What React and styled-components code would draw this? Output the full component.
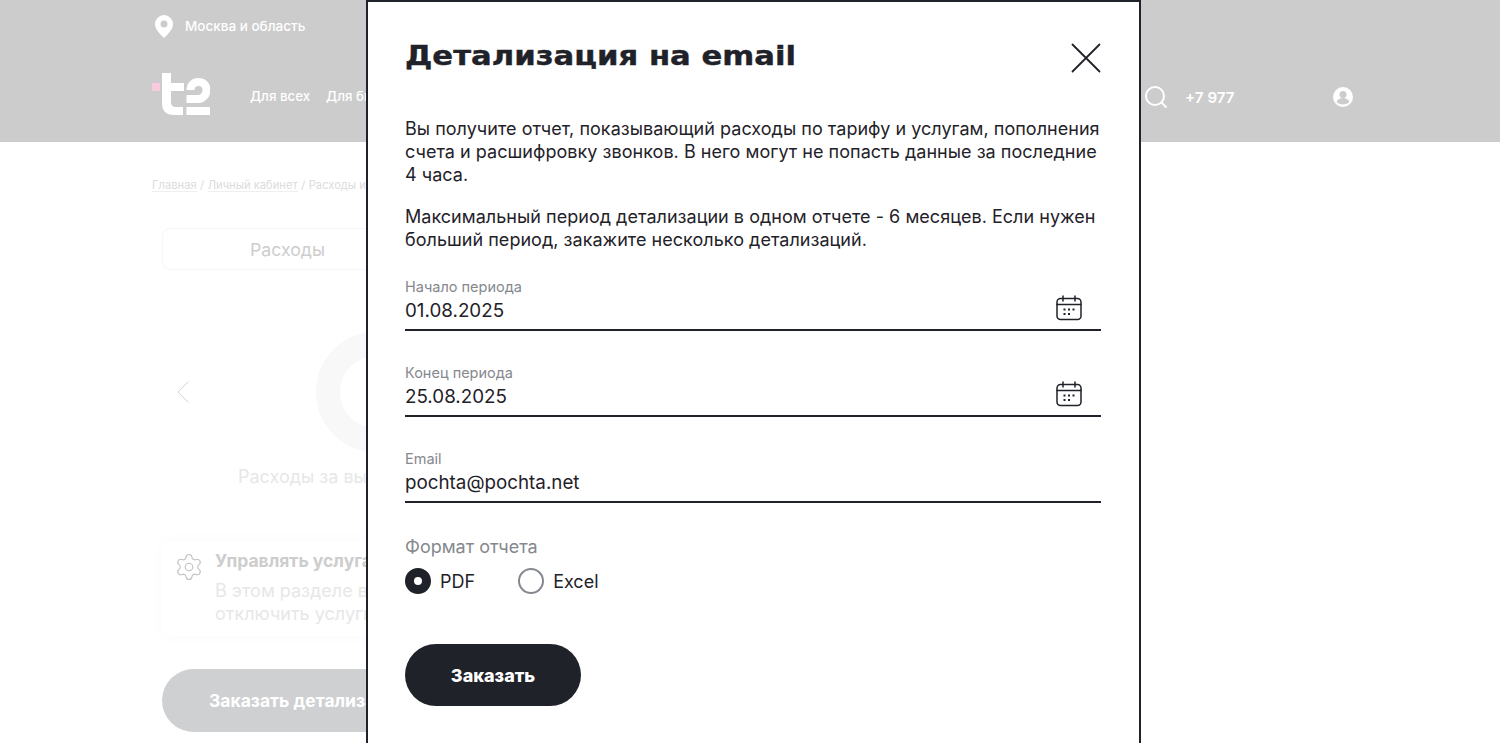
import styled, { createGlobalStyle } from "styled-components";
import { Settings, ChevronLeft } from "lucide-react";

const GlobalStyle = createGlobalStyle`
  html, body {
    margin: 0;
    padding: 0;
    height: 743px;
    overflow: hidden;
    background: #fff;
    font-family: Inter, "Noto Sans", sans-serif;
  }
`;

const PinIcon = () => (
  <svg width="18" height="23" viewBox="0 0 18 23" fill="#fff">
    <path
      fillRule="evenodd"
      d="M9 0a9 9 0 0 1 9 9c0 5-5 10.500-9 14C5 19.500 0 14 0 9a9 9 0 0 1 9-9zm0 5.500a3.500 3.500 0 1 0 0 7 3.500 3.500 0 0 0 0-7z"
    />
  </svg>
);

const Logo = () => (
  <svg width="58" height="42" viewBox="0 0 58 42">
    <rect x="0" y="10" width="8" height="8" fill="#f9c9de" />
    <path
      fill="#fff"
      d="M10 0h9v10h13v8H19v11q0 5 5 5h7v8h-9q-12 0-12-12z"
    />
    <path
      fill="none"
      stroke="#fff"
      strokeWidth="8"
      d="M38.500 17c0-5 3.500-8 8-8s8 3 8 8-4 9-8 9H34.500"
    />
    <rect x="34.500" y="34" width="23.500" height="8" fill="#fff" />
  </svg>
);

const SearchIcon = () => (
  <svg width="22" height="22" viewBox="0 0 22 22" fill="none" stroke="#fff" strokeWidth="2">
    <circle cx="10" cy="10" r="9" />
    <path d="M16.500 16.500L21 21" strokeLinecap="round" />
  </svg>
);

const UserIcon = () => (
  <svg width="20" height="20" viewBox="0 0 20 20">
    <circle cx="10" cy="10" r="10" fill="#fff" />
    <circle cx="10" cy="7.500" r="3.500" fill="#ccc" />
    <path d="M3.500 15c1-3 4-4 6.500-4s5.500 1 6.500 4c-1.500 1.500-4 2.500-6.500 2.500S5 16.500 3.500 15z" fill="#ccc" />
  </svg>
);

const CloseIcon = () => (
  <svg width="30" height="30" viewBox="0 0 30 30" stroke="#1f2229" strokeWidth="1.800" strokeLinecap="round">
    <path d="M1.500 1.500l27 27M28.500 1.500l-27 27" />
  </svg>
);

const CalendarIcon = () => (
  <svg width="26" height="26" viewBox="0 0 26 26" fill="none" stroke="#1f2229" strokeWidth="1.500">
    <rect x="1" y="3.500" width="24" height="21" rx="3.500" />
    <path d="M1 9.500h24M7 1v5M19 1v5" strokeLinecap="round" />
    <path d="M7.500 14.500h2M12 14.500h2M16.500 14.500h2M7.500 19h2M12 19h2" strokeWidth="2" />
  </svg>
);

const Header = styled.header`
  height: 142px;
  background: #ccc;
  color: #fff;
  padding: 0 147px 0 152px;
  box-sizing: border-box;
`;

const RegionRow = styled.div`
  height: 52px;
  padding-left: 3px;
  display: flex;
  align-items: center;
  gap: 12px;
  font-size: 13.500px;
  font-weight: 500;
`;

const NavRow = styled.div`
  display: flex;
  align-items: flex-start;
  height: 50px;
  padding-top: 21px;
`;

const Nav = styled.nav`
  display: flex;
  gap: 16px;
  margin: 15px 0 0 40px;
  font-size: 13.300px;
  font-weight: 500;
`;

const NavTools = styled.div`
  margin-left: auto;
  display: flex;
  align-items: center;
  margin-top: 13px;
`;

const Phone = styled.span`
  font-size: 15.200px;
  font-weight: 600;
  margin: 0 96px 0 18px;
  width: 52px;
  white-space: nowrap;
`;

const Content = styled.main`
  padding: 36px 0 0 152px;
`;

const Breadcrumbs = styled.div`
  font-size: 11.200px;
  color: #dcdcdc;
  display: flex;
  gap: 3.500px;
  height: 14px;
  line-height: 14px;

  a {
    border-bottom: 1px solid #efefef;
  }
`;

const Column = styled.div`
  margin-left: 10px;
  width: 420px;
`;

const Tab = styled.div`
  margin-top: 36px;
  height: 42px;
  border: 1px solid #f6f6f6;
  border-radius: 8px;
  box-sizing: border-box;
  padding-left: 87px;
  display: flex;
  align-items: center;
  font-size: 17.700px;
  color: #cdcdcd;
`;

const ChartRow = styled.div`
  display: flex;
  align-items: center;
  height: 120px;
  margin-top: 62px;
  padding-left: 1px;
  color: #cfd1d5;
`;

const Donut = styled.div`
  width: 120px;
  height: 120px;
  border-radius: 50%;
  border: 24px solid #f8f8f8;
  box-sizing: border-box;
  margin-left: 113px;
  flex-shrink: 0;
`;

const ChartCaption = styled.div`
  margin: 13px 0 0 76px;
  font-size: 18px;
  line-height: 24px;
  color: #e7e7e7;
`;

const ServiceCard = styled.div`
  margin-top: 52px;
  height: 95px;
  border-radius: 8px;
  box-shadow: 0 0 16px rgba(0, 0, 0, 0.025);
  box-sizing: border-box;
  padding: 10px 0 0 12px;
  display: flex;
  gap: 11px;
  color: #bfc1c4;
`;

const CardIcon = styled.div`
  margin-top: 1px;
`;

const CardTitle = styled.div`
  font-size: 17.500px;
  line-height: 20px;
  font-weight: 700;
  color: #cdcdcd;
  white-space: nowrap;
`;

const CardText = styled.div`
  margin-top: 8px;
  font-size: 18px;
  line-height: 23px;
  color: #e7e7e7;
`;

const WideButton = styled.div`
  margin-top: 33px;
  height: 63px;
  border-radius: 32px;
  background: #cfd0d2;
  color: #fff;
  display: flex;
  align-items: center;
  padding-left: 47px;
  font-size: 17.500px;
  font-weight: 700;
`;

/* модалка лежит поверх страницы */
const Modal = styled.section`
  position: absolute;
  top: 0;
  left: 366px;
  width: 775px;
  height: 760px;
  box-sizing: border-box;
  background: #fff;
  border: 2px solid #1f2229;
  padding: 0 37px;
  color: #1f2229;
`;

const ModalHead = styled.div`
  height: 115px;
  display: flex;
  justify-content: space-between;
  align-items: flex-start;
`;

const ModalTitle = styled.h2`
  margin: 34px 0 0;
  font-family: "DejaVu Sans", sans-serif;
  font-size: 27px;
  line-height: 40px;
  font-weight: 700;
  transform: scaleX(1.137);
  transform-origin: left center;
  -webkit-text-stroke: 0.4px #1f2229;
`;

const CloseButton = styled.div`
  margin: 41px 1px 0 0;
`;

const Paragraph = styled.p`
  margin: 0 0 ${(p) => p.$gap}px;
  font-size: 18px;
  line-height: 23px;
  letter-spacing: 0.03px;
`;

const Field = styled.div`
  position: relative;
  width: 696px;
  height: 53px;
  margin-bottom: 33px;
  box-sizing: border-box;
  border-bottom: 2px solid #1f2229;
`;

const FieldLabel = styled.div`
  font-size: 14.500px;
  line-height: 18px;
  color: #85888e;
`;

const FieldValue = styled.div`
  margin-top: 3px;
  font-size: 18.800px;
  line-height: 24px;
`;

const FieldIcon = styled.div`
  position: absolute;
  right: 19px;
  top: 17px;
`;

const FormatLabel = styled.div`
  margin-top: -1px;
  font-size: 18px;
  line-height: 24px;
  color: #85888e;
`;

const Radios = styled.div`
  display: flex;
  align-items: center;
  margin-top: 9px;
  gap: 43px;
`;

const RadioItem = styled.label`
  display: flex;
  align-items: center;
  gap: 9px;
  font-size: 18px;
`;

const RadioMark = styled.span`
  width: 26px;
  height: 26px;
  box-sizing: border-box;
  border-radius: 50%;
  background: ${(p) => (p.$checked ? "#fff" : "transparent")};
  border: ${(p) => (p.$checked ? "9px solid #1f2229" : "2px solid #85888e")};
`;

const SubmitButton = styled.div`
  margin-top: 50px;
  width: 176px;
  height: 62px;
  border-radius: 31px;
  background: #1f2229;
  color: #fff;
  display: flex;
  align-items: center;
  justify-content: center;
  font-size: 18px;
  font-weight: 800;
`;

const fields = [
  { label: "Начало периода", value: "01.08.2025", calendar: true },
  { label: "Конец периода", value: "25.08.2025", calendar: true },
  { label: "Email", value: "pochta@pochta.net" },
];

export default function App() {
  return (
    <>
      <GlobalStyle />
      <Header>
        <RegionRow>
          <PinIcon />
          Москва и область
        </RegionRow>
        <NavRow>
          <Logo />
          <Nav>
            <span>Для всех</span>
            <span>Для бизнеса</span>
          </Nav>
          <NavTools>
            <SearchIcon />
            <Phone>+7 977</Phone>
            <UserIcon />
          </NavTools>
        </NavRow>
      </Header>
      <Content>
        <Breadcrumbs>
          <a>Главная</a>/<a>Личный кабинет</a>/<span>Расходы и</span>
        </Breadcrumbs>
        <Column>
          <Tab>Расходы</Tab>
          <ChartRow>
            <ChevronLeft size={40} strokeWidth={0.6} />
            <Donut />
          </ChartRow>
          <ChartCaption>Расходы за выбор</ChartCaption>
          <ServiceCard>
            <CardIcon>
              <Settings size={30} strokeWidth={0.9} />
            </CardIcon>
            <div>
              <CardTitle>Управлять услугами</CardTitle>
              <CardText>
                В этом разделе вы
                <br />
                отключить услуги
              </CardText>
            </div>
          </ServiceCard>
          <WideButton>Заказать детализацию</WideButton>
        </Column>
      </Content>
      <Modal>
        <ModalHead>
          <ModalTitle>Детализация на email</ModalTitle>
          <CloseButton>
            <CloseIcon />
          </CloseButton>
        </ModalHead>
        <Paragraph $gap={19}>
          Вы получите отчет, показывающий расходы по тарифу и услугам, пополнения счета и
          расшифровку звонков. В него могут не попасть данные за последние 4 часа.
        </Paragraph>
        <Paragraph $gap={27}>
          Максимальный период детализации в одном отчете - 6 месяцев. Если нужен больший
          период, закажите несколько детализаций.
        </Paragraph>
        {fields.map((f) => (
          <Field key={f.label}>
            <FieldLabel>{f.label}</FieldLabel>
            <FieldValue>{f.value}</FieldValue>
            {f.calendar && (
              <FieldIcon>
                <CalendarIcon />
              </FieldIcon>
            )}
          </Field>
        ))}
        <FormatLabel>Формат отчета</FormatLabel>
        <Radios>
          <RadioItem>
            <RadioMark $checked />
            PDF
          </RadioItem>
          <RadioItem>
            <RadioMark />
            Excel
          </RadioItem>
        </Radios>
        <SubmitButton>Заказать</SubmitButton>
      </Modal>
    </>
  );
}
